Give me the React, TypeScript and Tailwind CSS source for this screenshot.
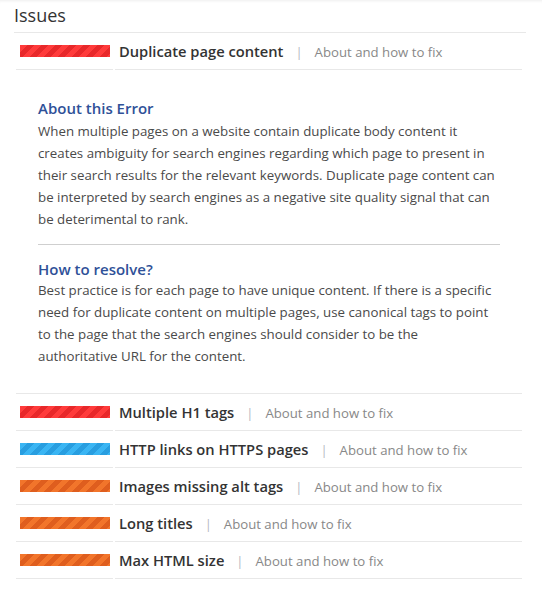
// Issues list, one row expanded with its explanation.

type Severity = 'error' | 'notice' | 'warning'

interface Issue {
  title: string
  severity: Severity
  about?: { error: string; resolve: string }
}

const ISSUES: Issue[] = [
  {
    title: 'Duplicate page content',
    severity: 'error',
    about: {
      error:
        'When multiple pages on a website contain duplicate body content it creates ambiguity for search engines regarding which page to present in their search results for the relevant keywords. Duplicate page content can be interpreted by search engines as a negative site quality signal that can be deterimental to rank.',
      resolve:
        'Best practice is for each page to have unique content. If there is a specific need for duplicate content on multiple pages, use canonical tags to point to the page that the search engines should consider to be the authoritative URL for the content.',
    },
  },
  { title: 'Multiple H1 tags', severity: 'error' },
  { title: 'HTTP links on HTTPS pages', severity: 'notice' },
  { title: 'Images missing alt tags', severity: 'warning' },
  { title: 'Long titles', severity: 'warning' },
  { title: 'Max HTML size', severity: 'warning' },
]

const barCls: Record<Severity, string> = {
  error: 'bg-[repeating-linear-gradient(135deg,#ff3b3b_0_5px,#e8282a_5px_10px)]',
  notice: 'bg-[repeating-linear-gradient(135deg,#3ab5f3_0_5px,#289ee0_5px_10px)]',
  warning: 'bg-[repeating-linear-gradient(135deg,#f2752b_0_5px,#df5e1e_5px_10px)]',
}

const cellCls = 'border-b border-[#e8e8e8] h-[37px] p-0 align-middle'

function IssueRow({ issue }: { issue: Issue }) {
  return (
    <>
      <tr>
        <td className={`${cellCls} w-[97px] pl-[4px]`}>
          <div className={`w-[90px] h-[12px] ${barCls[issue.severity]}`} />
        </td>
        <td className={`${cellCls} pl-[4px]`}>
          <span className="text-[14.7px] font-semibold text-[#333]">{issue.title}</span>
          <span className="mx-[12px] text-[13px] text-[#b3b8c2]">|</span>
          <a className="text-[13.2px] text-[#888] cursor-pointer">About and how to fix</a>
        </td>
      </tr>
      {issue.about && (
        <tr>
          <td colSpan={2} className="border-b border-[#e8e8e8] px-[22px] pt-[28px] pb-[26px]">
            <h3 className="text-[15px] leading-5 font-semibold text-[#2f5198]">About this Error</h3>
            <p className="mt-[2px] text-[13.3px] leading-[22px] text-[#4a4a4a]">{issue.about.error}</p>
            <div className="h-px bg-[#cfcfcf] mt-[14px] mb-[14px]" />
            <h3 className="text-[15px] leading-5 font-semibold text-[#2f5198]">How to resolve?</h3>
            <p className="text-[13.3px] leading-[22px] text-[#4a4a4a]">{issue.about.resolve}</p>
          </td>
        </tr>
      )}
    </>
  )
}

export default function App() {
  return (
    <div
      className="w-[542px] h-[590px] bg-white shadow-[inset_0_3px_3px_-2px_rgba(0,0,0,0.07)]"
      style={{ fontFamily: '"Open Sans", "Liberation Sans", sans-serif' }}
    >
      <div className="pl-[14px] pr-[16px]">
        <h2 className="text-[18px] leading-6 text-[#333] pt-[3px] pb-[5px] border-b border-[#e8e8e8]">
          Issues
        </h2>
        <table className="w-[510px] border-separate border-spacing-x-[2px] border-spacing-y-0">
          <tbody>
            {ISSUES.map((issue) => (
              <IssueRow key={issue.title} issue={issue} />
            ))}
          </tbody>
        </table>
      </div>
    </div>
  )
}
